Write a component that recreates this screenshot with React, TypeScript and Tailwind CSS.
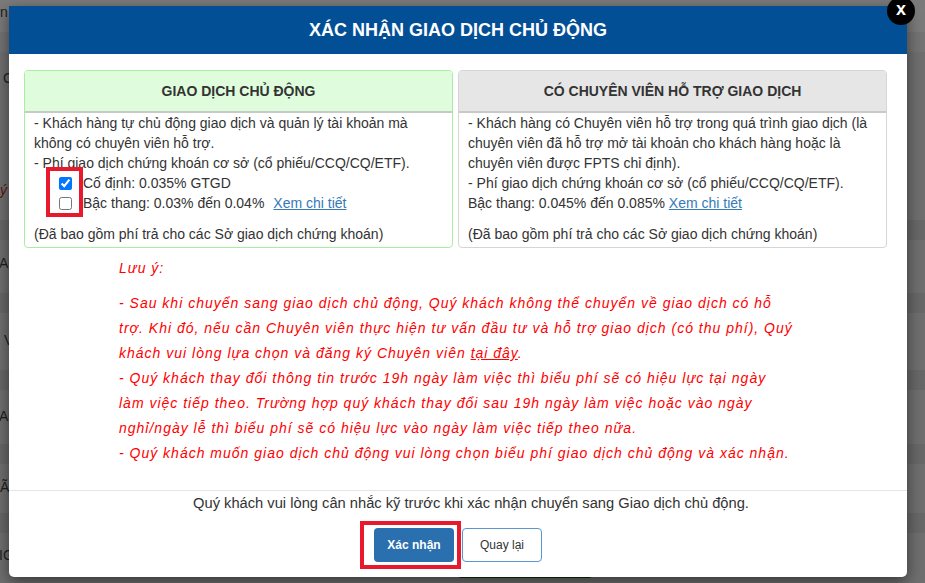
const noteLines = [
  "- Sau khi chuyển sang giao dịch chủ động, Quý khách không thể chuyển về giao dịch có hỗ",
  "trợ. Khi đó, nếu cần Chuyên viên thực hiện tư vấn đầu tư và hỗ trợ giao dịch (có thu phí), Quý",
];

const noteTail = [
  "- Quý khách thay đổi thông tin trước 19h ngày làm việc thì biểu phí sẽ có hiệu lực tại ngày",
  "làm việc tiếp theo. Trường hợp quý khách thay đổi sau 19h ngày làm việc hoặc vào ngày",
  "nghỉ/ngày lễ thì biểu phí sẽ có hiệu lực vào ngày làm việc tiếp theo nữa.",
  "- Quý khách muốn giao dịch chủ động vui lòng chọn biểu phí giao dịch chủ động và xác nhận.",
];

const bgRows = [
  { body: "h-[53px] pt-[13px]", text: "AC", indent: "-ml-[1px]" },
  { body: "h-[57px] pt-[17px]", text: "V", indent: "ml-[4px]" },
  { body: "h-[54px] pt-[16px]", text: "AC", indent: "-ml-[1px]" },
  { body: "h-[49px] pt-[13px]", text: "Ã", indent: "ml-0" },
];

/** The dimmed page sitting behind the dialog. */
function BackgroundPage() {
  return (
    <div className="flex h-full w-full flex-col text-[14px] leading-[20px] text-[#1e1e1e]">
      <div className="h-[32px] bg-[#7b7b7b] pt-[2px]">
        <span className="ml-0">n</span>
      </div>
      <div className="h-[20px] bg-[#747474]" />
      <div className="h-[168px] bg-[#6f6f6f] pt-[16px]">
        <div className="ml-[3px]">C</div>
        <div className="ml-0 mt-[92px] italic text-[#5c1515]">ý</div>
      </div>
      {bgRows.map((row, i) => (
        <div key={i}>
          <div className="h-[20px] bg-[#686868]" />
          <div className={`${row.body} bg-[#6f6f6f]`}>
            <div className={row.indent}>{row.text}</div>
          </div>
        </div>
      ))}
      <div className="h-[20px] bg-[#686868]" />
      <div className="flex-1 bg-[#6f6f6f] pt-[12px]">
        <div className="-ml-[1px]">IG</div>
        <div className="ml-[458px] mt-[8px] h-[5px] w-[134px] rounded-b-[3px] bg-[#0a300d]" />
      </div>
    </div>
  );
}

function PanelHeader({ label, tone }: { label: string; tone: string }) {
  return (
    <div
      className={`flex h-[42px] items-center justify-center border-b-2 border-[#c9c9c9] text-[14px] font-bold text-[#333] ${tone}`}
    >
      {label}
    </div>
  );
}

export default function App() {
  return (
    <div className="relative h-[583px] w-[925px] overflow-hidden bg-[#6f6f6f] font-['Liberation_Sans',Arial,sans-serif]">
      <BackgroundPage />

      <div className="absolute left-[9px] top-[6px] w-[898px] rounded-b-[5px] bg-white shadow-[0_5px_15px_rgba(0,0,0,0.5)]">
        <div className="flex h-[48px] items-center justify-center bg-[#034f96] text-[18px] font-bold text-white">
          XÁC NHẬN GIAO DỊCH CHỦ ĐỘNG
        </div>

        <div className="pb-[24px] pl-[15px] pr-[20px] pt-[16px]">
          <div className="grid grid-cols-2 gap-[5px]">
            <div className="relative overflow-hidden rounded-[4px] border border-[#a9eda3]">
              <PanelHeader label="GIAO DỊCH CHỦ ĐỘNG" tone="bg-[#dffddc]" />
              <div className="px-[9px] pb-[3px] text-[14px] leading-[20px] text-[#333]">
                <p>
                  - Khách hàng tự chủ động giao dịch và quản lý tài khoản mà
                  <br />
                  không có chuyên viên hỗ trợ.
                </p>
                <p>- Phí giao dịch chứng khoán cơ sở (cổ phiếu/CCQ/CQ/ETF).</p>
                <label className="flex h-[20px] items-center pl-[25px]">
                  <input type="checkbox" defaultChecked className="m-0 h-[13px] w-[13px]" />
                  <span className="ml-[11px]">Cố định: 0.035% GTGD</span>
                </label>
                <label className="flex h-[20px] items-center pl-[25px]">
                  <input type="checkbox" className="m-0 h-[13px] w-[13px]" />
                  <span className="ml-[11px]">Bậc thang: 0.03% đến 0.04%</span>
                  <a href="#" className="ml-[9px] text-[#337ab7] underline">
                    Xem chi tiết
                  </a>
                </label>
                <p className="mt-[11px]">(Đã bao gồm phí trả cho các Sở giao dịch chứng khoán)</p>
              </div>
              <div className="absolute left-[21px] top-[96px] h-[50px] w-[37px] border-4 border-[#e8192c]" />
            </div>

            <div className="overflow-hidden rounded-[4px] border border-[#d5d5d5]">
              <PanelHeader label="CÓ CHUYÊN VIÊN HỖ TRỢ GIAO DỊCH" tone="bg-[#e6e6e6]" />
              <div className="px-[9px] pb-[3px] text-[14px] leading-[20px] text-[#333]">
                <p>
                  - Khách hàng có Chuyên viên hỗ trợ trong quá trình giao dịch (là
                  <br />
                  chuyên viên đã hỗ trợ mở tài khoản cho khách hàng hoặc là
                  <br />
                  chuyên viên được FPTS chỉ định).
                </p>
                <p>- Phí giao dịch chứng khoán cơ sở (cổ phiếu/CCQ/CQ/ETF).</p>
                <p>
                  Bậc thang: 0.045% đến 0.085%{" "}
                  <a href="#" className="text-[#337ab7] underline">
                    Xem chi tiết
                  </a>
                </p>
                <p className="mt-[11px]">(Đã bao gồm phí trả cho các Sở giao dịch chứng khoán)</p>
              </div>
            </div>
          </div>

          <div className="ml-[95px] mt-[8px] whitespace-nowrap text-[14px] italic leading-[25px] tracking-[1px] text-[#f00]">
            <p>Lưu ý:</p>
            <p className="mt-[10px]">
              {noteLines.map((line) => (
                <span key={line} className="block">
                  {line}
                </span>
              ))}
              <span className="block">
                khách vui lòng lựa chọn và đăng ký Chuyên viên <u>tại đây</u>.
              </span>
              {noteTail.map((line) => (
                <span key={line} className="block">
                  {line}
                </span>
              ))}
            </p>
          </div>
        </div>

        <div className="border-t border-[#e5e5e5] pb-[15px] pt-[2px]">
          <p className="pl-[26px] text-center text-[14.7px] leading-[20px] text-[#333]">
            Quý khách vui lòng cân nhắc kỹ trước khi xác nhận chuyển sang Giao dịch chủ động.
          </p>
          <div className="relative mt-[15px] flex justify-center gap-[8px]">
            <button className="h-[34px] w-[80px] rounded-[4px] bg-[#2a6fae] text-[12px] font-bold text-white">
              Xác nhận
            </button>
            <button className="h-[34px] w-[80px] rounded-[4px] border border-[#5a96cf] bg-white text-[12px] text-[#333]">
              Quay lại
            </button>
            <div className="absolute left-[351px] top-[-7px] h-[48px] w-[101px] border-4 border-[#e8192c]" />
          </div>
        </div>
      </div>

      <button className="absolute left-[887px] top-[-3px] flex h-[28px] w-[28px] items-center justify-center rounded-full bg-black pb-[4px] text-[18px] font-bold leading-none text-white">
        x
      </button>
    </div>
  );
}
